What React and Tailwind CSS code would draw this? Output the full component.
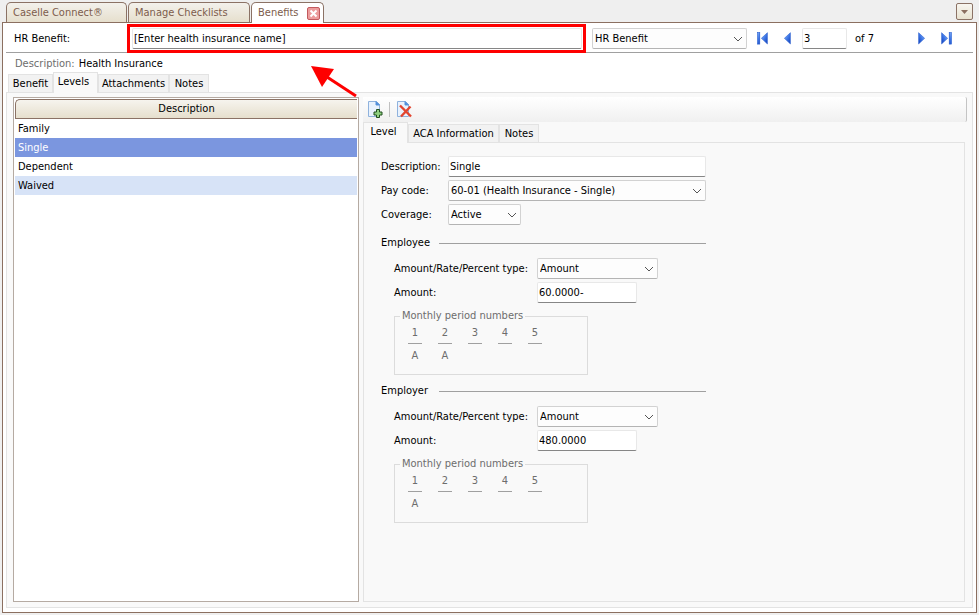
import React, { useState } from "react";

const levels = ["Family", "Single", "Dependent", "Waived"];

const Chevron = () => (
  <svg viewBox="0 0 10 6" className="col-start-1 row-start-1 justify-self-end self-center mr-1 w-[10px] h-[6px] pointer-events-none">
    <path d="M1 1l4 4 4-4" fill="none" stroke="#555" strokeWidth="1" />
  </svg>
);

const Select = ({ id, label, options, className = "" }) => (
  <div className={`grid ${className}`}>
    <select
      id={id}
      aria-label={label}
      className="col-start-1 row-start-1 appearance-none w-full h-[21px] pl-[2px] pr-4 rounded-xs border border-[#d2d2d2] border-b-[#b4b4b4] bg-[#fdfdfd] outline-none"
    >
      {options.map((option) => (
        <option key={option}>{option}</option>
      ))}
    </select>
    <Chevron />
  </div>
);

const TextBox = ({ className = "", ...props }) => (
  <input
    type="text"
    className={`h-[21px] px-px rounded-xs border border-[#e8e8e8] border-b-[#868686] bg-white outline-none ${className}`}
    {...props}
  />
);

const NavIcon = ({ type }) => {
  const flip = type === "next" || type === "last";
  const bar = type === "first" || type === "last";
  return (
    <svg width="11" height="13" viewBox="0 0 11 13">
      <defs>
        <linearGradient id={`nav-${type}`} x1="0" y1="0" x2="1" y2="1">
          <stop offset="0" stopColor="#9cc4ff" />
          <stop offset="0.5" stopColor="#3f78e6" />
          <stop offset="1" stopColor="#0f3cb8" />
        </linearGradient>
      </defs>
      <g transform={flip ? "translate(11 0) scale(-1 1)" : undefined} fill={`url(#nav-${type})`} stroke="#2a5fd0" strokeWidth="0.6">
        {bar && <rect x="0.4" y="0.5" width="2.4" height="11.6" />}
        <path d="M10.4 0.7v11.2L4.4 6.300z" />
      </g>
    </svg>
  );
};

const NavButton = ({ type, label, className = "" }) => (
  <button type="button" aria-label={label} className={className}>
    <NavIcon type={type} />
  </button>
);

const SubTabs = ({ tabs, active, onSelect, className = "" }) => (
  <div role="tablist" className={`flex items-end h-5 ${className}`}>
    {tabs.map((tab) => (
      <button
        key={tab.name}
        type="button"
        role="tab"
        aria-selected={tab.name === active}
        onClick={() => onSelect(tab.name)}
        className={`${tab.width} shrink-0 border border-b-0 border-[#e3e3e3] ${
          tab.name === active ? "relative -mb-px h-[21px] bg-[#f9f9f9] pr-1 pb-[3px]" : "h-[18px] bg-[#f2f2f2]"
        }`}
      >
        {tab.name}
      </button>
    ))}
  </div>
);

const PeriodNumbers = ({ values }) => (
  <fieldset className="w-[194px] h-[66px] border border-[#dcdcdc] text-[#6d6d6d]">
    <legend className="ml-[5px] px-[2px]">Monthly period numbers</legend>
    <table className="ml-[5px] border-separate border-spacing-0">
      <thead>
        <tr>
          {[1, 2, 3, 4, 5].map((n) => (
            <th key={n} className="w-[30px] px-2 font-normal">
              <div className="w-[14px] h-[21px] pt-[3px] border-b border-[#a0a0a0]">{n}</div>
            </th>
          ))}
        </tr>
      </thead>
      <tbody>
        <tr>
          {values.map((value, i) => (
            <td key={i} className="pt-[5px] text-center">
              {value}
            </td>
          ))}
        </tr>
      </tbody>
    </table>
  </fieldset>
);

const RateSection = ({ title, id, amount, periods }) => (
  <section>
    <div className="flex items-center w-[325px] h-[14px]">
      <h2 className="w-[58px]">{title}</h2>
      <div className="flex-1 h-px bg-[#a0a0a0]" />
    </div>
    <div className="mt-2 ml-[13px]">
      <div className="grid grid-cols-[143px_auto] justify-start items-center gap-y-[3px]">
        <label htmlFor={`${id}-type`}>Amount/Rate/Percent type:</label>
        <Select id={`${id}-type`} options={["Amount", "Rate", "Percent"]} className="w-[121px]" />
        <label htmlFor={`${id}-amount`}>Amount:</label>
        <TextBox id={`${id}-amount`} defaultValue={amount} className="w-[100px]" />
      </div>
      <div className="mt-[6px]">
        <PeriodNumbers values={periods} />
      </div>
    </div>
  </section>
);

const PageIcon = () => (
  <>
    <path d="M1.5 0.5h8l3 3v12h-11z" fill="#e9f2fd" stroke="#8fb2dd" />
    <path d="M9 0.5v3.500h3.500z" fill="#3f86e0" stroke="#5b93d8" />
  </>
);

const DocumentTab = ({ children, active, className = "" }) => (
  <div
    className={`flex items-center rounded-t-[5px] border border-b-0 border-[#8b7265] pl-[6px] text-[#7d5c4c] ${
      active ? "relative -mb-px h-[21px] bg-white" : "h-[20px] bg-linear-to-b from-[#f3f1ec] to-[#e6dfcd] pt-px"
    } ${className}`}
  >
    {children}
  </div>
);

const App = () => {
  const [selected, setSelected] = useState("Single");
  const [tab, setTab] = useState("Levels");
  const [levelTab, setLevelTab] = useState("Level");

  return (
    <div className="flex flex-col min-h-screen bg-[#efefef] px-[2px] pb-[2px] font-['DejaVu_Sans_Condensed','DejaVu_Sans',sans-serif] text-[11px] leading-[14px] text-black">
      <header className="flex items-end h-[22px] pl-1 pr-1">
        <nav className="flex flex-1 items-end gap-px">
          <DocumentTab className="w-[121px]">
            <button type="button">Caselle Connect®</button>
          </DocumentTab>
          <DocumentTab className="w-[122px]">
            <button type="button">Manage Checklists</button>
          </DocumentTab>
          <DocumentTab active className="w-[73px] justify-between pr-[3px]">
            <button type="button">Benefits</button>
            <button type="button" aria-label="Close tab">
              <svg width="13" height="13" viewBox="0 0 13 13">
                <rect x="0.5" y="0.5" width="12" height="12" rx="1.5" fill="#ec9c9c" stroke="#c25a5e" />
                <path d="M3.500 3.500l6 6M9.500 3.500l-6 6" stroke="#fff" strokeWidth="2" />
              </svg>
            </button>
          </DocumentTab>
        </nav>
        <button
          type="button"
          aria-label="Show all tabs"
          className="grid place-items-center self-center mt-px w-[17px] h-[17px] rounded-xs border border-[#8b7265] bg-linear-to-b from-[#f8f6f0] to-[#e8e2d0]"
        >
          <svg width="7" height="4" viewBox="0 0 7 4">
            <path d="M0 0h7L3.500 4z" fill="#8b6f60" />
          </svg>
        </button>
      </header>

      <main className="flex flex-1 flex-col border border-[#8b6f60] bg-white pl-[3px] pr-[3px] pb-1">
        <div className="flex items-center h-[30px] border-b border-[#a0a0a0] pl-2 pt-[2px]">
          <label htmlFor="benefit-name" className="w-[118px]">
            HR Benefit:
          </label>
          <div className="relative z-10 flex-1">
            <TextBox id="benefit-name" defaultValue="[Enter health insurance name]" className="w-full" />
            <div className="absolute -left-[5px] -right-1 -top-1 -bottom-1 border-3 border-[#fe0000] pointer-events-none" />
          </div>
          <Select label="Search by" options={["HR Benefit"]} className="ml-[10px] w-[155px]" />
          <NavButton type="first" label="First record" className="ml-[10px]" />
          <NavButton type="prev" label="Previous record" className="ml-3" />
          <TextBox aria-label="Record number" defaultValue="3" className="ml-[11px] w-[45px]" />
          <span className="ml-2 w-[55px]">of 7</span>
          <NavButton type="next" label="Next record" className="ml-2" />
          <NavButton type="last" label="Last record" className="ml-3 mr-[21px]" />
        </div>

        <div className="relative flex gap-1 h-[19px] items-center pl-[9px] pt-[2px]">
          <span className="text-[#6d6d6d]">Description:</span>
          <span>Health Insurance</span>
          <svg width="48" height="34" viewBox="0 0 48 34" className="absolute left-[304px] top-3 pointer-events-none">
            <path d="M46 31L17 12" stroke="#fe0000" strokeWidth="3" />
            <path d="M1 1l23 3-12 18z" fill="#fe0000" />
          </svg>
        </div>

        <SubTabs
          tabs={[
            { name: "Benefit", width: "w-[45px]" },
            { name: "Levels", width: "w-[45px]" },
            { name: "Attachments", width: "w-[71px]" },
            { name: "Notes", width: "w-[40px]" },
          ]}
          active={tab}
          onSelect={setTab}
          className="pl-[2px]"
        />

        <div className="flex flex-1 border border-[#e3e3e3] bg-[#f9f9f9] pl-[6px] pr-[5px] pt-1 pb-[5px]">
          <div className="w-[346px] shrink-0 border border-[#b5aaa2] bg-white p-px">
            <table className="w-full border-separate border-spacing-0">
              <thead>
                <tr>
                  <th className="h-5 rounded-tl-[5px] border border-r-0 border-[#8b7265] bg-linear-to-b from-[#f6f4ee] to-[#e6dfcd] p-0 font-normal">
                    Description
                  </th>
                </tr>
              </thead>
              <tbody>
                {levels.map((level, i) => (
                  <tr
                    key={level}
                    onClick={() => setSelected(level)}
                    className={
                      level === selected ? "bg-[#7b96df] text-white" : i % 2 ? "bg-[#d7e3f7]" : "bg-white"
                    }
                  >
                    <td className="h-[19px] py-0 pl-[3px]">{level}</td>
                  </tr>
                ))}
              </tbody>
            </table>
          </div>

          <div className="flex flex-1 flex-col min-w-0 ml-1">
            <div className="flex items-center h-[25px] rounded-r-xs border-r border-[#c4c4c4] bg-linear-to-b from-white to-[#f0f0f0] pl-1">
              <button type="button" aria-label="Add level">
                <svg width="16" height="17" viewBox="0 0 16 17">
                  <PageIcon />
                  <path d="M9.500 8.500h3v2.500h2.500v3h-2.500v2.500h-3v-2.500h-2.500v-3h2.500z" fill="#8fd07f" stroke="#1f4d1f" />
                </svg>
              </button>
              <div className="ml-[6px] mr-[6px] w-px h-[15px] bg-[#c0c0c0]" />
              <button type="button" aria-label="Delete level">
                <svg width="16" height="17" viewBox="0 0 16 17">
                  <PageIcon />
                  <path d="M4 4.500l11 11M14.500 5.500L5 15.500" stroke="#e2452f" strokeWidth="2.400" />
                </svg>
              </button>
            </div>

            <SubTabs
              tabs={[
                { name: "Level", width: "w-[45px]" },
                { name: "ACA Information", width: "w-[91px]" },
                { name: "Notes", width: "w-[40px]" },
              ]}
              active={levelTab}
              onSelect={setLevelTab}
            />

            <form className="flex flex-1 flex-col gap-[9px] mr-[2px] border border-[#e3e3e3] pl-[17px] pt-[13px]">
              <div className="grid grid-cols-[67px_258px] justify-start items-center gap-y-[3px] pb-[2px]">
                <label htmlFor="description">Description:</label>
                <TextBox id="description" defaultValue="Single" />
                <label htmlFor="pay-code">Pay code:</label>
                <Select id="pay-code" options={["60-01 (Health Insurance - Single)"]} />
                <label htmlFor="coverage">Coverage:</label>
                <Select id="coverage" options={["Active", "Inactive"]} className="w-[73px]" />
              </div>
              <RateSection title="Employee" id="employee" amount="60.0000-" periods={["A", "A", "", "", ""]} />
              <RateSection title="Employer" id="employer" amount="480.0000" periods={["A", "", "", "", ""]} />
            </form>
          </div>
        </div>
      </main>
    </div>
  );
};

export default App;
